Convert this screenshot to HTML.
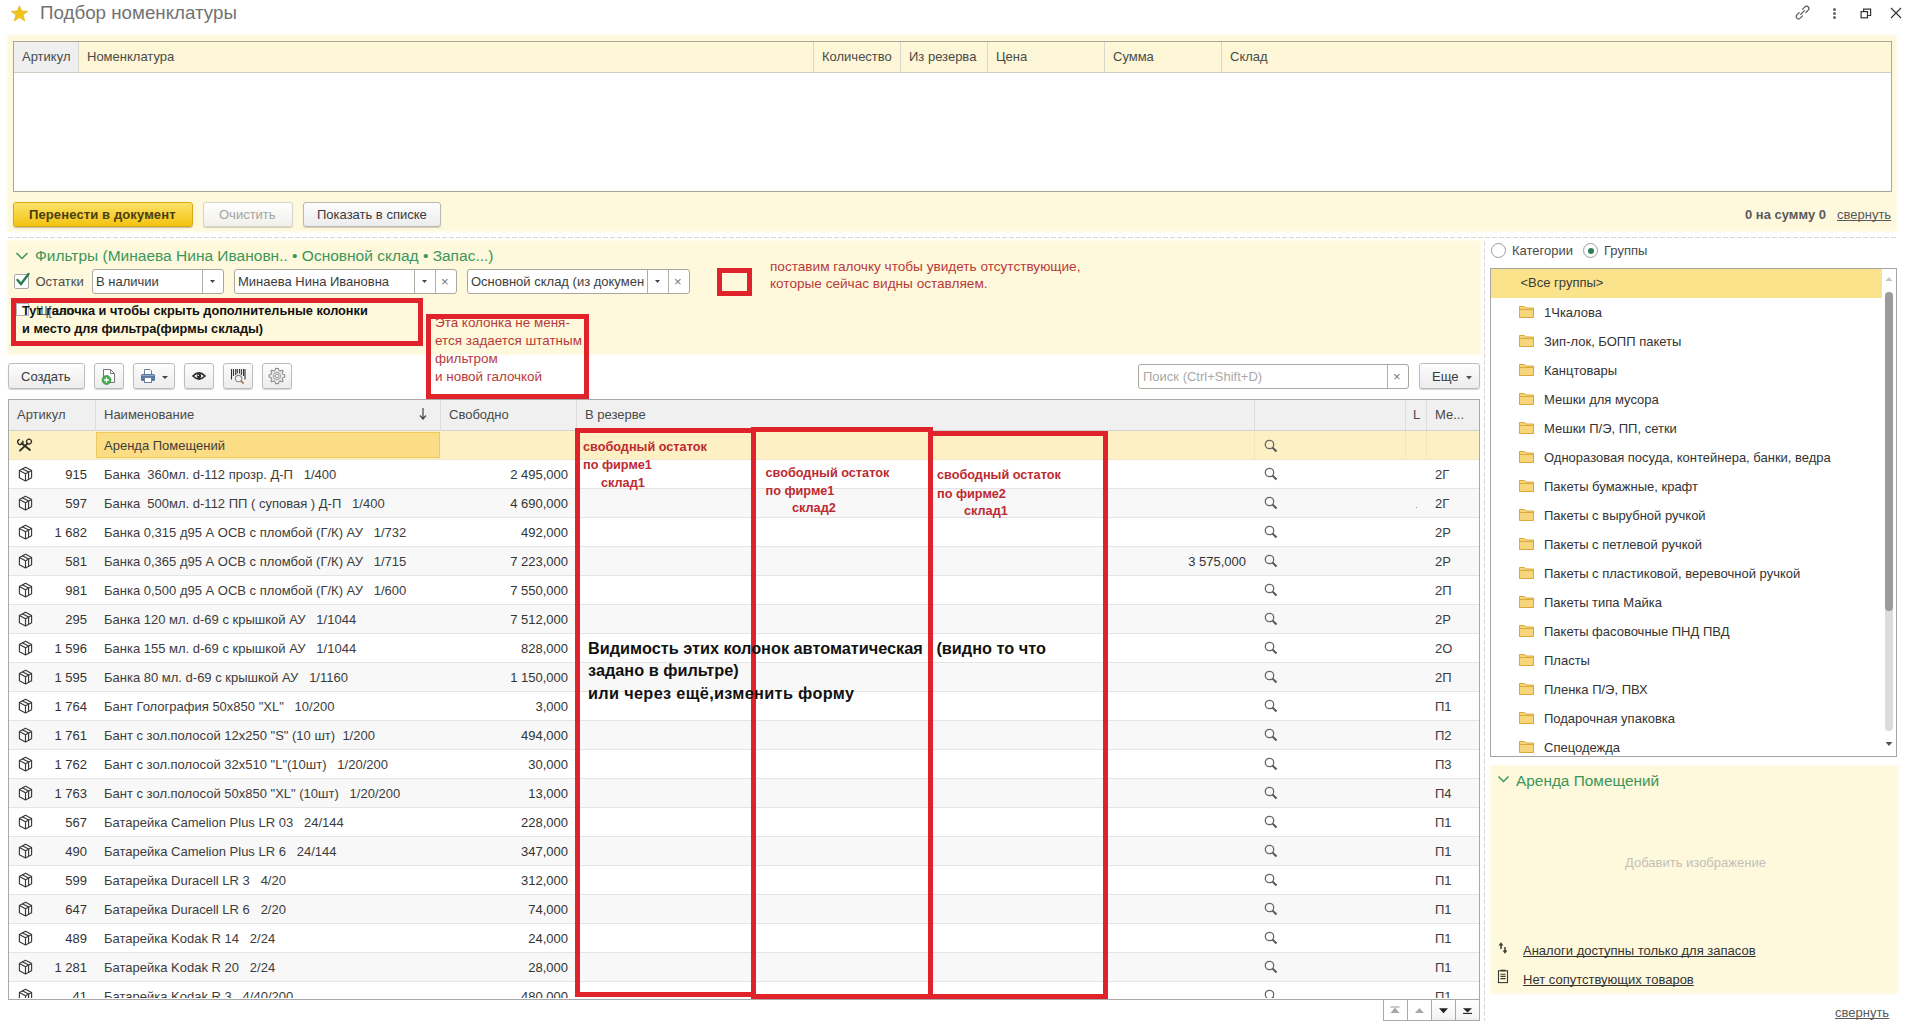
<!DOCTYPE html>
<html><head><meta charset="utf-8"><style>
*{box-sizing:border-box;margin:0;padding:0}
html,body{width:1908px;height:1027px;overflow:hidden;background:#fff}
body{position:relative;font-family:"Liberation Sans",sans-serif;font-size:13px;color:#3c3c3c}
.a{position:absolute}
.t{position:absolute;white-space:pre;line-height:1;text-decoration-skip-ink:none}
.yp{position:absolute;background:#fef9dc;box-shadow:0 0 2px 1px rgba(254,249,220,.8)}
.hl{position:absolute;height:1px;background:repeating-linear-gradient(90deg,#d9d9d9 0 5px,transparent 5px 7px)}
.vl{position:absolute;width:1px;background:repeating-linear-gradient(180deg,#d9d9d9 0 5px,transparent 5px 7px)}
.btn{position:absolute;border:1px solid #bdbdbd;border-radius:3px;background:linear-gradient(#fdfdfd,#ececec);box-shadow:0 1px 1px rgba(0,0,0,.18)}
.rbox{position:absolute;border:5px solid #e0222b}
.red{color:#b9393a}
.rb{color:#cf2a31;font-weight:bold}
.inp{position:absolute;border:1px solid #aaa89c;border-radius:3px;background:#fff}
.sep{position:absolute;width:1px;background:#b0aea2}
.hsep{position:absolute;height:1px;background:#e3e3e3}
</style></head><body>
<svg class="a" style="left:10px;top:5px" width="19" height="17" viewBox="0 0 19 17"><path d="M9.5 0.8 L11.8 6.0 L17.8 6.3 L13.1 10.0 L14.8 15.9 L9.5 12.6 L4.2 15.9 L5.9 10.0 L1.2 6.3 L7.2 6.0 Z" fill="#f3c318" stroke="#e0ac10" stroke-width=".6"/></svg>
<div class="t" style="left:40px;top:4.43px;font-size:18.75px;color:#727272">Подбор номенклатуры</div>
<svg class="a" style="left:1793px;top:3px" width="19" height="19" viewBox="0 0 19 19" fill="none" stroke="#555" stroke-width="1.2" stroke-linecap="round"><path d="M9.6 6.2 L11.9 3.9 a2.3 2.3 0 0 1 3.3 3.3 L12.9 9.5"/><path d="M6.2 9.6 L3.9 11.9 a2.3 2.3 0 0 0 3.3 3.3 L9.5 12.9"/><path d="M7.6 11.4 L11.4 7.6"/></svg>
<div class="a" style="left:1833px;top:8px;width:3px;height:3px;border-radius:50%;background:#666"></div>
<div class="a" style="left:1833px;top:12px;width:3px;height:3px;border-radius:50%;background:#666"></div>
<div class="a" style="left:1833px;top:16px;width:3px;height:3px;border-radius:50%;background:#666"></div>
<svg class="a" style="left:1860px;top:8px" width="12" height="11" viewBox="0 0 12 11" fill="none" stroke="#333" stroke-width="1.2"><rect x="1.1" y="3.6" width="6.4" height="6.2"/><path d="M3.6 3.6 V1.1 H10.6 V7.5 H7.5"/></svg>
<svg class="a" style="left:1889px;top:6px" width="14" height="14" viewBox="0 0 14 14" fill="none" stroke="#333" stroke-width="1.2"><path d="M2 2 L12 12 M12 2 L2 12"/></svg>
<div class="yp" style="left:8px;top:36px;width:1888px;height:195px;"></div>
<div class="a" style="left:13px;top:41px;width:1879px;height:151px;border:1px solid #a9a69a;background:#fff"></div>
<div class="a" style="left:14px;top:42px;width:1877px;height:31px;background:#fdf7d7;border-bottom:1px solid #cfcdc2"></div>
<div class="a" style="left:14px;top:42px;width:64px;height:31px;background:#efeff0;border-bottom:1px solid #cfcdc2"></div>
<div class="a" style="left:78px;top:42px;width:1px;height:30px;background:#d9d8cf"></div>
<div class="a" style="left:813px;top:42px;width:1px;height:30px;background:#d9d8cf"></div>
<div class="a" style="left:900px;top:42px;width:1px;height:30px;background:#d9d8cf"></div>
<div class="a" style="left:987px;top:42px;width:1px;height:30px;background:#d9d8cf"></div>
<div class="a" style="left:1104px;top:42px;width:1px;height:30px;background:#d9d8cf"></div>
<div class="a" style="left:1221px;top:42px;width:1px;height:30px;background:#d9d8cf"></div>
<div class="t" style="left:22px;top:50.00px;font-size:13.0px;color:#4a4a4a">Артикул</div>
<div class="t" style="left:87px;top:50.00px;font-size:13.0px;color:#4a4a4a">Номенклатура</div>
<div class="t" style="left:822px;top:50.00px;font-size:13.0px;color:#4a4a4a">Количество</div>
<div class="t" style="left:909px;top:50.00px;font-size:13.0px;color:#4a4a4a">Из резерва</div>
<div class="t" style="left:996px;top:50.00px;font-size:13.0px;color:#4a4a4a">Цена</div>
<div class="t" style="left:1113px;top:50.00px;font-size:13.0px;color:#4a4a4a">Сумма</div>
<div class="t" style="left:1230px;top:50.00px;font-size:13.0px;color:#4a4a4a">Склад</div>
<div class="a" style="left:13px;top:202px;width:180px;height:25px;border:1px solid #d8ac14;border-radius:3px;background:linear-gradient(#fbe16a,#f2c30f);box-shadow:0 1px 1px rgba(0,0,0,.25)"></div>
<div class="t" style="left:29px;top:208.00px;font-size:13.0px;font-weight:bold;color:#4b3e0a;letter-spacing:.12px">Перенести в документ</div>
<div class="btn" style="left:203px;top:202px;width:90px;height:25px;border-color:#d6d4cc;background:linear-gradient(#fefefe,#f1f0ea)"></div>
<div class="t" style="left:219px;top:208.00px;font-size:13.0px;color:#a3a3a0">Очистить</div>
<div class="btn" style="left:303px;top:202px;width:138px;height:25px;border-color:#b9b8b0"></div>
<div class="t" style="left:317px;top:208.00px;font-size:13.0px;color:#3a3a3a">Показать в списке</div>
<div class="t" style="left:1745px;top:208.00px;font-size:13.0px;font-weight:bold;color:#5a5a5a">0 на сумму 0</div>
<div class="t" style="left:1837px;top:208.00px;font-size:13.0px;color:#5a5a5a;text-decoration:underline;text-underline-offset:1px">свернуть</div>
<div class="hl" style="left:8px;top:237px;width:1888px;height:1px;"></div>
<div class="yp" style="left:8px;top:241px;width:1472px;height:113px;"></div>
<svg class="a" style="left:15px;top:251px" width="14" height="10" viewBox="0 0 14 10" fill="none" stroke="#3c955a" stroke-width="1.5"><path d="M1.5 2 L7 7.5 L12.5 2"/></svg>
<div class="t" style="left:35px;top:248.38px;font-size:15.5px;color:#3c955a">Фильтры (Минаева Нина Ивановн.. • Основной склад • Запас...)</div>
<div class="a" style="left:14px;top:274px;width:15px;height:15px;border:1px solid #a7a7a7;background:#fff;border-radius:2px"></div>
<svg class="a" style="left:15px;top:272px" width="16" height="15" viewBox="0 0 16 15" fill="none" stroke="#247d52" stroke-width="2.4" stroke-linecap="round"><path d="M2.5 8 L6 12 L13.5 2"/></svg>
<div class="t" style="left:35.5px;top:275.00px;font-size:13.0px;color:#4a4a4a">Остатки</div>
<div class="inp" style="left:92px;top:269px;width:132px;height:25px;"></div>
<div class="sep" style="left:202px;top:270px;width:1px;height:23px;"></div>
<div class="t" style="left:96px;top:275.00px;font-size:13.0px;color:#3c3c3c">В наличии</div>
<svg class="a" style="left:210px;top:280px" width="5" height="3"><path d="M0 0 H5 L2.5 3 Z" fill="#444"/></svg>
<div class="inp" style="left:234px;top:269px;width:223px;height:25px;"></div>
<div class="sep" style="left:414px;top:270px;width:1px;height:23px;"></div>
<div class="sep" style="left:435px;top:270px;width:1px;height:23px;"></div>
<div class="t" style="left:238px;top:275.00px;font-size:13.0px;color:#3c3c3c">Минаева Нина Ивановна</div>
<svg class="a" style="left:422px;top:280px" width="5" height="3"><path d="M0 0 H5 L2.5 3 Z" fill="#444"/></svg>
<div class="t" style="left:441px;top:275px;font-size:13px;color:#777">×</div>
<div class="inp" style="left:467px;top:269px;width:223px;height:25px;"></div>
<div class="sep" style="left:647px;top:270px;width:1px;height:23px;"></div>
<div class="sep" style="left:668px;top:270px;width:1px;height:23px;"></div>
<div class="t" style="left:471px;top:275.00px;font-size:13.0px;color:#3c3c3c">Основной склад (из докумен</div>
<svg class="a" style="left:655px;top:280px" width="5" height="3"><path d="M0 0 H5 L2.5 3 Z" fill="#444"/></svg>
<div class="t" style="left:674px;top:275px;font-size:13px;color:#777">×</div>
<div class="rbox" style="left:717px;top:268px;width:35px;height:28px;"></div>
<div class="t red" style="left:770px;top:260.49px;font-size:13.6px;">поставим галочку чтобы увидеть отсутствующие,</div>
<div class="t red" style="left:770px;top:277.49px;font-size:13.6px;">которые сейчас видны оставляем.</div>
<div class="a" style="left:16px;top:303px;width:13px;height:13px;border:1px solid #b5b5b5;background:#fff"></div>
<div class="t" style="left:36px;top:304.00px;font-size:13px;color:#606060">Щ[ean</div>
<div class="rbox" style="left:11px;top:298px;width:412px;height:48px;"></div>
<div class="t" style="left:22px;top:304.51px;font-size:12.75px;font-weight:bold;color:#111">Тут галочка и чтобы скрыть дополнительные колонки</div>
<div class="t" style="left:22px;top:322.51px;font-size:12.75px;font-weight:bold;color:#111">и место для фильтра(фирмы склады)</div>
<div class="t" style="left:435px;top:316.41px;font-size:13.45px;color:#b9393a">Эта колонка не меня-</div>
<div class="t" style="left:435px;top:334.31px;font-size:13.45px;color:#b9393a">ется задается штатным</div>
<div class="t" style="left:435px;top:352.21px;font-size:13.45px;color:#b9393a">фильтром</div>
<div class="t" style="left:435px;top:370.11px;font-size:13.45px;color:#b9393a">и новой галочкой</div>
<div class="rbox" style="left:426px;top:314px;width:163px;height:85px;"></div>
<div class="btn" style="left:8px;top:363px;width:77px;height:26px;"></div>
<div class="t" style="left:21px;top:370.00px;font-size:13.0px;color:#3a3a3a">Создать</div>
<div class="btn" style="left:94px;top:363px;width:30px;height:26px;"></div>
<svg class="a" style="left:100px;top:366px" width="18" height="20" viewBox="0 0 18 20"><path d="M3.5 3.5 H10.5 L14.5 7.5 V16.5 H3.5 Z" fill="#fff" stroke="#777" stroke-width="1"/><path d="M10.5 3.5 V7.5 H14.5" fill="none" stroke="#777" stroke-width="1"/><circle cx="6.5" cy="14" r="4.4" fill="#45b04f" stroke="#2e8c38" stroke-width=".8"/><path d="M6.5 11.6 V16.4 M4.1 14 H8.9" stroke="#fff" stroke-width="1.3"/></svg>
<div class="btn" style="left:133px;top:363px;width:42px;height:26px;"></div>
<svg class="a" style="left:140px;top:368px" width="16" height="16" viewBox="0 0 16 16"><path d="M4.5 6 V1.5 H10 L11.5 3 V6" fill="#fff" stroke="#6a7f99" stroke-width="1"/><rect x="1" y="6" width="14" height="7" rx="1.5" fill="#5679a3"/><rect x="2" y="7" width="12" height="1" fill="#8ba6c6"/><rect x="4.5" y="9.5" width="7" height="5" fill="#fff" stroke="#6a7f99" stroke-width="1"/></svg>
<svg class="a" style="left:162px;top:376px" width="6" height="3"><path d="M0 0 H6 L3 3 Z" fill="#444"/></svg>
<div class="btn" style="left:184px;top:363px;width:30px;height:26px;"></div>
<svg class="a" style="left:192px;top:371px" width="14" height="10" viewBox="0 0 14 10"><path d="M1 5 Q7 -1 13 5 Q7 11 1 5 Z" fill="#fff" stroke="#2b2b2b" stroke-width="1.7"/><circle cx="7" cy="5" r="2.3" fill="#2b2b2b"/><circle cx="6.2" cy="4.4" r=".7" fill="#fff"/></svg>
<div class="btn" style="left:223px;top:363px;width:30px;height:26px;"></div>
<svg class="a" style="left:229px;top:368px" width="18" height="18" viewBox="0 0 18 18" fill="none"><path d="M2.5 1 V11.5 M4.5 1 V8 M6.7 1 V7 M8.3 1 V5.5 M10.5 1 V5.5 M12.4 1 V7 M14.5 1 V8 M16 1 V11.5" stroke="#333" stroke-width="1.1"/><circle cx="9.6" cy="10.6" r="3.2" fill="#f4f4f4" stroke="#888" stroke-width="1.1"/><path d="M11.9 12.9 L14.6 15.6" stroke="#a57a4a" stroke-width="1.6"/></svg>
<div class="btn" style="left:262px;top:363px;width:30px;height:26px;"></div>
<svg class="a" style="left:268px;top:367px" width="18" height="18" viewBox="0 0 18 18"><path d="M9 1.2 L10.4 1.4 L10.9 3.4 L12.4 4.1 L14.2 3.1 L15.2 4.1 L14.2 5.9 L14.8 7.4 L16.8 7.9 V10.1 L14.8 10.6 L14.2 12.1 L15.2 13.9 L14.2 14.9 L12.4 13.9 L10.9 14.6 L10.4 16.6 H7.6 L7.1 14.6 L5.6 13.9 L3.8 14.9 L2.8 13.9 L3.8 12.1 L3.2 10.6 L1.2 10.1 V7.9 L3.2 7.4 L3.8 5.9 L2.8 4.1 L3.8 3.1 L5.6 4.1 L7.1 3.4 L7.6 1.4 Z" fill="#f2f2f2" stroke="#909090" stroke-width="1.1"/><circle cx="9" cy="9" r="3.6" fill="none" stroke="#a8a8a8" stroke-width="1.3"/><circle cx="9" cy="9" r="1.8" fill="#fff" stroke="#909090" stroke-width="1"/></svg>
<div class="inp" style="left:1138px;top:364px;width:271px;height:25px;"></div>
<div class="sep" style="left:1387px;top:365px;width:1px;height:23px;"></div>
<div class="t" style="left:1143px;top:370.00px;font-size:13.0px;color:#a9a9a9">Поиск (Ctrl+Shift+D)</div>
<div class="t" style="left:1393px;top:370px;font-size:13px;color:#777">×</div>
<div class="btn" style="left:1419px;top:363px;width:61px;height:26px;"></div>
<div class="t" style="left:1432px;top:370.00px;font-size:13.0px;color:#3a3a3a">Еще</div>
<svg class="a" style="left:1466px;top:376px" width="6" height="4"><path d="M0 0 H6 L3 3.5 Z" fill="#555"/></svg>
<div class="a" style="left:8px;top:399px;width:1472px;height:601px;border:1px solid #a9a9a9;background:#fff"></div>
<div class="a" style="left:9px;top:400px;width:1470px;height:31px;background:#f0f0f0;border-bottom:1px solid #d2d2d2"></div>
<div class="a" style="left:95px;top:400px;width:1px;height:30px;background:#dcdcdc"></div>
<div class="a" style="left:440px;top:400px;width:1px;height:30px;background:#dcdcdc"></div>
<div class="a" style="left:576px;top:400px;width:1px;height:30px;background:#dcdcdc"></div>
<div class="a" style="left:1254px;top:400px;width:1px;height:30px;background:#dcdcdc"></div>
<div class="a" style="left:1405px;top:400px;width:1px;height:30px;background:#dcdcdc"></div>
<div class="a" style="left:1426px;top:400px;width:1px;height:30px;background:#dcdcdc"></div>
<div class="t" style="left:17px;top:408.00px;font-size:13.0px;color:#4a4a4a">Артикул</div>
<div class="t" style="left:104px;top:408.00px;font-size:13.0px;color:#4a4a4a">Наименование</div>
<div class="t" style="left:449px;top:408.00px;font-size:13.0px;color:#4a4a4a">Свободно</div>
<div class="t" style="left:585px;top:408.00px;font-size:13.0px;color:#4a4a4a">В резерве</div>
<div class="t" style="left:1413px;top:408.00px;font-size:13.0px;color:#4a4a4a">L</div>
<div class="t" style="left:1435px;top:408.00px;font-size:13.0px;color:#4a4a4a">Ме...</div>
<svg class="a" style="left:419px;top:408px" width="8" height="12" viewBox="0 0 8 12"><path d="M4 0 V10.5 M1 7.5 L4 11 L7 7.5" fill="none" stroke="#444" stroke-width="1.2"/></svg>
<div class="a" style="left:9px;top:431px;width:1470px;height:567px;overflow:hidden">
<div class="a" style="left:0px;top:0px;width:1470px;height:28px;background:#fdf0c4"></div>
<div class="a" style="left:87px;top:1px;width:344px;height:26px;background:#fbdd85;border:1px solid #efc85a"></div>
<div class="a" style="left:567px;top:0px;width:1px;height:28px;background:#f4e5b5"></div>
<div class="a" style="left:1245px;top:0px;width:1px;height:28px;background:#f4e5b5"></div>
<div class="a" style="left:1396px;top:0px;width:1px;height:28px;background:#f4e5b5"></div>
<div class="a" style="left:1417px;top:0px;width:1px;height:28px;background:#f4e5b5"></div>
<div class="a" style="left:0px;top:28px;width:1470px;height:1px;background:#efe7cc"></div>
<svg class="a" style="left:8px;top:7px" width="16" height="14" viewBox="0 0 16 14" fill="none" stroke="#2e2e24" stroke-linecap="round"><path d="M4.6 5.2 L13 12" stroke-width="1.9"/><path d="M2.2 1.6 a2.6 2.6 0 1 0 3.6 1.6" stroke-width="1.5"/><path d="M10.4 5.6 L3 12.6" stroke-width="1.9"/><ellipse cx="12" cy="3.6" rx="2.4" ry="2.4" transform="rotate(45 12 3.6)" stroke-width="1.3"/></svg>
<div class="t" style="left:95px;top:8.00px;font-size:13.0px;color:#3c3c3c">Аренда Помещений</div>
<svg class="a" style="left:1255px;top:8px" width="14" height="14" viewBox="0 0 14 14"><circle cx="5.5" cy="5.5" r="4.2" fill="none" stroke="#666" stroke-width="1.3"/><path d="M8.6 8.6 L12.5 12.5" stroke="#555" stroke-width="2"/></svg>
<div class="a" style="left:0px;top:29px;width:1470px;height:28px;background:#ffffff"></div>
<div class="a" style="left:0px;top:57px;width:1470px;height:1px;background:#e4e4e4"></div>
<svg class="a" style="left:9px;top:35px" width="15" height="16" viewBox="0 0 15 16" fill="none" stroke="#3a3a3a" stroke-width="1.15" stroke-linejoin="round"><path d="M7.5 1.2 L13.6 4.4 V11.8 L7.5 15 L1.4 11.8 V4.4 Z"/><path d="M1.4 4.4 L7.5 7.7 L13.6 4.4 M7.5 7.7 V15"/><path d="M4.3 2.7 L10.6 6 V13.4"/></svg>
<div class="t" style="right:1392px;top:37.00px;font-size:13.0px;color:#333">915</div>
<div class="t" style="left:95px;top:37.00px;font-size:13.0px;color:#3c3c3c">Банка  360мл. d-112 прозр. Д-П   1/400</div>
<div class="t" style="right:911px;top:37.00px;font-size:13.0px;color:#333">2 495,000</div>
<svg class="a" style="left:1255px;top:36px" width="14" height="14" viewBox="0 0 14 14"><circle cx="5.5" cy="5.5" r="4.2" fill="none" stroke="#666" stroke-width="1.3"/><path d="M8.6 8.6 L12.5 12.5" stroke="#555" stroke-width="2"/></svg>
<div class="t" style="left:1426px;top:37.00px;font-size:13.0px;color:#3c3c3c">2Г</div>
<div class="a" style="left:0px;top:58px;width:1470px;height:28px;background:#f8f8f8"></div>
<div class="a" style="left:0px;top:86px;width:1470px;height:1px;background:#e4e4e4"></div>
<svg class="a" style="left:9px;top:64px" width="15" height="16" viewBox="0 0 15 16" fill="none" stroke="#3a3a3a" stroke-width="1.15" stroke-linejoin="round"><path d="M7.5 1.2 L13.6 4.4 V11.8 L7.5 15 L1.4 11.8 V4.4 Z"/><path d="M1.4 4.4 L7.5 7.7 L13.6 4.4 M7.5 7.7 V15"/><path d="M4.3 2.7 L10.6 6 V13.4"/></svg>
<div class="t" style="right:1392px;top:66.00px;font-size:13.0px;color:#333">597</div>
<div class="t" style="left:95px;top:66.00px;font-size:13.0px;color:#3c3c3c">Банка  500мл. d-112 ПП ( суповая ) Д-П   1/400</div>
<div class="t" style="right:911px;top:66.00px;font-size:13.0px;color:#333">4 690,000</div>
<svg class="a" style="left:1255px;top:65px" width="14" height="14" viewBox="0 0 14 14"><circle cx="5.5" cy="5.5" r="4.2" fill="none" stroke="#666" stroke-width="1.3"/><path d="M8.6 8.6 L12.5 12.5" stroke="#555" stroke-width="2"/></svg>
<div class="t" style="left:1426px;top:66.00px;font-size:13.0px;color:#3c3c3c">2Г</div>
<div class="a" style="left:0px;top:87px;width:1470px;height:28px;background:#ffffff"></div>
<div class="a" style="left:0px;top:115px;width:1470px;height:1px;background:#e4e4e4"></div>
<svg class="a" style="left:9px;top:93px" width="15" height="16" viewBox="0 0 15 16" fill="none" stroke="#3a3a3a" stroke-width="1.15" stroke-linejoin="round"><path d="M7.5 1.2 L13.6 4.4 V11.8 L7.5 15 L1.4 11.8 V4.4 Z"/><path d="M1.4 4.4 L7.5 7.7 L13.6 4.4 M7.5 7.7 V15"/><path d="M4.3 2.7 L10.6 6 V13.4"/></svg>
<div class="t" style="right:1392px;top:95.00px;font-size:13.0px;color:#333">1 682</div>
<div class="t" style="left:95px;top:95.00px;font-size:13.0px;color:#3c3c3c">Банка 0,315 д95 А ОСВ с пломбой (Г/К) АУ   1/732</div>
<div class="t" style="right:911px;top:95.00px;font-size:13.0px;color:#333">492,000</div>
<svg class="a" style="left:1255px;top:94px" width="14" height="14" viewBox="0 0 14 14"><circle cx="5.5" cy="5.5" r="4.2" fill="none" stroke="#666" stroke-width="1.3"/><path d="M8.6 8.6 L12.5 12.5" stroke="#555" stroke-width="2"/></svg>
<div class="t" style="left:1426px;top:95.00px;font-size:13.0px;color:#3c3c3c">2Р</div>
<div class="a" style="left:0px;top:116px;width:1470px;height:28px;background:#f8f8f8"></div>
<div class="a" style="left:0px;top:144px;width:1470px;height:1px;background:#e4e4e4"></div>
<svg class="a" style="left:9px;top:122px" width="15" height="16" viewBox="0 0 15 16" fill="none" stroke="#3a3a3a" stroke-width="1.15" stroke-linejoin="round"><path d="M7.5 1.2 L13.6 4.4 V11.8 L7.5 15 L1.4 11.8 V4.4 Z"/><path d="M1.4 4.4 L7.5 7.7 L13.6 4.4 M7.5 7.7 V15"/><path d="M4.3 2.7 L10.6 6 V13.4"/></svg>
<div class="t" style="right:1392px;top:124.00px;font-size:13.0px;color:#333">581</div>
<div class="t" style="left:95px;top:124.00px;font-size:13.0px;color:#3c3c3c">Банка 0,365 д95 А ОСВ с пломбой (Г/К) АУ   1/715</div>
<div class="t" style="right:911px;top:124.00px;font-size:13.0px;color:#333">7 223,000</div>
<div class="t" style="right:233px;top:124.00px;font-size:13.0px;color:#333">3 575,000</div>
<svg class="a" style="left:1255px;top:123px" width="14" height="14" viewBox="0 0 14 14"><circle cx="5.5" cy="5.5" r="4.2" fill="none" stroke="#666" stroke-width="1.3"/><path d="M8.6 8.6 L12.5 12.5" stroke="#555" stroke-width="2"/></svg>
<div class="t" style="left:1426px;top:124.00px;font-size:13.0px;color:#3c3c3c">2Р</div>
<div class="a" style="left:0px;top:145px;width:1470px;height:28px;background:#ffffff"></div>
<div class="a" style="left:0px;top:173px;width:1470px;height:1px;background:#e4e4e4"></div>
<svg class="a" style="left:9px;top:151px" width="15" height="16" viewBox="0 0 15 16" fill="none" stroke="#3a3a3a" stroke-width="1.15" stroke-linejoin="round"><path d="M7.5 1.2 L13.6 4.4 V11.8 L7.5 15 L1.4 11.8 V4.4 Z"/><path d="M1.4 4.4 L7.5 7.7 L13.6 4.4 M7.5 7.7 V15"/><path d="M4.3 2.7 L10.6 6 V13.4"/></svg>
<div class="t" style="right:1392px;top:153.00px;font-size:13.0px;color:#333">981</div>
<div class="t" style="left:95px;top:153.00px;font-size:13.0px;color:#3c3c3c">Банка 0,500 д95 А ОСВ с пломбой (Г/К) АУ   1/600</div>
<div class="t" style="right:911px;top:153.00px;font-size:13.0px;color:#333">7 550,000</div>
<svg class="a" style="left:1255px;top:152px" width="14" height="14" viewBox="0 0 14 14"><circle cx="5.5" cy="5.5" r="4.2" fill="none" stroke="#666" stroke-width="1.3"/><path d="M8.6 8.6 L12.5 12.5" stroke="#555" stroke-width="2"/></svg>
<div class="t" style="left:1426px;top:153.00px;font-size:13.0px;color:#3c3c3c">2П</div>
<div class="a" style="left:0px;top:174px;width:1470px;height:28px;background:#f8f8f8"></div>
<div class="a" style="left:0px;top:202px;width:1470px;height:1px;background:#e4e4e4"></div>
<svg class="a" style="left:9px;top:180px" width="15" height="16" viewBox="0 0 15 16" fill="none" stroke="#3a3a3a" stroke-width="1.15" stroke-linejoin="round"><path d="M7.5 1.2 L13.6 4.4 V11.8 L7.5 15 L1.4 11.8 V4.4 Z"/><path d="M1.4 4.4 L7.5 7.7 L13.6 4.4 M7.5 7.7 V15"/><path d="M4.3 2.7 L10.6 6 V13.4"/></svg>
<div class="t" style="right:1392px;top:182.00px;font-size:13.0px;color:#333">295</div>
<div class="t" style="left:95px;top:182.00px;font-size:13.0px;color:#3c3c3c">Банка 120 мл. d-69 с крышкой АУ   1/1044</div>
<div class="t" style="right:911px;top:182.00px;font-size:13.0px;color:#333">7 512,000</div>
<svg class="a" style="left:1255px;top:181px" width="14" height="14" viewBox="0 0 14 14"><circle cx="5.5" cy="5.5" r="4.2" fill="none" stroke="#666" stroke-width="1.3"/><path d="M8.6 8.6 L12.5 12.5" stroke="#555" stroke-width="2"/></svg>
<div class="t" style="left:1426px;top:182.00px;font-size:13.0px;color:#3c3c3c">2Р</div>
<div class="a" style="left:0px;top:203px;width:1470px;height:28px;background:#ffffff"></div>
<div class="a" style="left:0px;top:231px;width:1470px;height:1px;background:#e4e4e4"></div>
<svg class="a" style="left:9px;top:209px" width="15" height="16" viewBox="0 0 15 16" fill="none" stroke="#3a3a3a" stroke-width="1.15" stroke-linejoin="round"><path d="M7.5 1.2 L13.6 4.4 V11.8 L7.5 15 L1.4 11.8 V4.4 Z"/><path d="M1.4 4.4 L7.5 7.7 L13.6 4.4 M7.5 7.7 V15"/><path d="M4.3 2.7 L10.6 6 V13.4"/></svg>
<div class="t" style="right:1392px;top:211.00px;font-size:13.0px;color:#333">1 596</div>
<div class="t" style="left:95px;top:211.00px;font-size:13.0px;color:#3c3c3c">Банка 155 мл. d-69 с крышкой АУ   1/1044</div>
<div class="t" style="right:911px;top:211.00px;font-size:13.0px;color:#333">828,000</div>
<svg class="a" style="left:1255px;top:210px" width="14" height="14" viewBox="0 0 14 14"><circle cx="5.5" cy="5.5" r="4.2" fill="none" stroke="#666" stroke-width="1.3"/><path d="M8.6 8.6 L12.5 12.5" stroke="#555" stroke-width="2"/></svg>
<div class="t" style="left:1426px;top:211.00px;font-size:13.0px;color:#3c3c3c">2О</div>
<div class="a" style="left:0px;top:232px;width:1470px;height:28px;background:#f8f8f8"></div>
<div class="a" style="left:0px;top:260px;width:1470px;height:1px;background:#e4e4e4"></div>
<svg class="a" style="left:9px;top:238px" width="15" height="16" viewBox="0 0 15 16" fill="none" stroke="#3a3a3a" stroke-width="1.15" stroke-linejoin="round"><path d="M7.5 1.2 L13.6 4.4 V11.8 L7.5 15 L1.4 11.8 V4.4 Z"/><path d="M1.4 4.4 L7.5 7.7 L13.6 4.4 M7.5 7.7 V15"/><path d="M4.3 2.7 L10.6 6 V13.4"/></svg>
<div class="t" style="right:1392px;top:240.00px;font-size:13.0px;color:#333">1 595</div>
<div class="t" style="left:95px;top:240.00px;font-size:13.0px;color:#3c3c3c">Банка 80 мл. d-69 с крышкой АУ   1/1160</div>
<div class="t" style="right:911px;top:240.00px;font-size:13.0px;color:#333">1 150,000</div>
<svg class="a" style="left:1255px;top:239px" width="14" height="14" viewBox="0 0 14 14"><circle cx="5.5" cy="5.5" r="4.2" fill="none" stroke="#666" stroke-width="1.3"/><path d="M8.6 8.6 L12.5 12.5" stroke="#555" stroke-width="2"/></svg>
<div class="t" style="left:1426px;top:240.00px;font-size:13.0px;color:#3c3c3c">2П</div>
<div class="a" style="left:0px;top:261px;width:1470px;height:28px;background:#ffffff"></div>
<div class="a" style="left:0px;top:289px;width:1470px;height:1px;background:#e4e4e4"></div>
<svg class="a" style="left:9px;top:267px" width="15" height="16" viewBox="0 0 15 16" fill="none" stroke="#3a3a3a" stroke-width="1.15" stroke-linejoin="round"><path d="M7.5 1.2 L13.6 4.4 V11.8 L7.5 15 L1.4 11.8 V4.4 Z"/><path d="M1.4 4.4 L7.5 7.7 L13.6 4.4 M7.5 7.7 V15"/><path d="M4.3 2.7 L10.6 6 V13.4"/></svg>
<div class="t" style="right:1392px;top:269.00px;font-size:13.0px;color:#333">1 764</div>
<div class="t" style="left:95px;top:269.00px;font-size:13.0px;color:#3c3c3c">Бант Голография 50х850 "XL"   10/200</div>
<div class="t" style="right:911px;top:269.00px;font-size:13.0px;color:#333">3,000</div>
<svg class="a" style="left:1255px;top:268px" width="14" height="14" viewBox="0 0 14 14"><circle cx="5.5" cy="5.5" r="4.2" fill="none" stroke="#666" stroke-width="1.3"/><path d="M8.6 8.6 L12.5 12.5" stroke="#555" stroke-width="2"/></svg>
<div class="t" style="left:1426px;top:269.00px;font-size:13.0px;color:#3c3c3c">П1</div>
<div class="a" style="left:0px;top:290px;width:1470px;height:28px;background:#f8f8f8"></div>
<div class="a" style="left:0px;top:318px;width:1470px;height:1px;background:#e4e4e4"></div>
<svg class="a" style="left:9px;top:296px" width="15" height="16" viewBox="0 0 15 16" fill="none" stroke="#3a3a3a" stroke-width="1.15" stroke-linejoin="round"><path d="M7.5 1.2 L13.6 4.4 V11.8 L7.5 15 L1.4 11.8 V4.4 Z"/><path d="M1.4 4.4 L7.5 7.7 L13.6 4.4 M7.5 7.7 V15"/><path d="M4.3 2.7 L10.6 6 V13.4"/></svg>
<div class="t" style="right:1392px;top:298.00px;font-size:13.0px;color:#333">1 761</div>
<div class="t" style="left:95px;top:298.00px;font-size:13.0px;color:#3c3c3c">Бант с зол.полосой 12х250 "S" (10 шт)  1/200</div>
<div class="t" style="right:911px;top:298.00px;font-size:13.0px;color:#333">494,000</div>
<svg class="a" style="left:1255px;top:297px" width="14" height="14" viewBox="0 0 14 14"><circle cx="5.5" cy="5.5" r="4.2" fill="none" stroke="#666" stroke-width="1.3"/><path d="M8.6 8.6 L12.5 12.5" stroke="#555" stroke-width="2"/></svg>
<div class="t" style="left:1426px;top:298.00px;font-size:13.0px;color:#3c3c3c">П2</div>
<div class="a" style="left:0px;top:319px;width:1470px;height:28px;background:#ffffff"></div>
<div class="a" style="left:0px;top:347px;width:1470px;height:1px;background:#e4e4e4"></div>
<svg class="a" style="left:9px;top:325px" width="15" height="16" viewBox="0 0 15 16" fill="none" stroke="#3a3a3a" stroke-width="1.15" stroke-linejoin="round"><path d="M7.5 1.2 L13.6 4.4 V11.8 L7.5 15 L1.4 11.8 V4.4 Z"/><path d="M1.4 4.4 L7.5 7.7 L13.6 4.4 M7.5 7.7 V15"/><path d="M4.3 2.7 L10.6 6 V13.4"/></svg>
<div class="t" style="right:1392px;top:327.00px;font-size:13.0px;color:#333">1 762</div>
<div class="t" style="left:95px;top:327.00px;font-size:13.0px;color:#3c3c3c">Бант с зол.полосой 32х510 "L"(10шт)   1/20/200</div>
<div class="t" style="right:911px;top:327.00px;font-size:13.0px;color:#333">30,000</div>
<svg class="a" style="left:1255px;top:326px" width="14" height="14" viewBox="0 0 14 14"><circle cx="5.5" cy="5.5" r="4.2" fill="none" stroke="#666" stroke-width="1.3"/><path d="M8.6 8.6 L12.5 12.5" stroke="#555" stroke-width="2"/></svg>
<div class="t" style="left:1426px;top:327.00px;font-size:13.0px;color:#3c3c3c">П3</div>
<div class="a" style="left:0px;top:348px;width:1470px;height:28px;background:#f8f8f8"></div>
<div class="a" style="left:0px;top:376px;width:1470px;height:1px;background:#e4e4e4"></div>
<svg class="a" style="left:9px;top:354px" width="15" height="16" viewBox="0 0 15 16" fill="none" stroke="#3a3a3a" stroke-width="1.15" stroke-linejoin="round"><path d="M7.5 1.2 L13.6 4.4 V11.8 L7.5 15 L1.4 11.8 V4.4 Z"/><path d="M1.4 4.4 L7.5 7.7 L13.6 4.4 M7.5 7.7 V15"/><path d="M4.3 2.7 L10.6 6 V13.4"/></svg>
<div class="t" style="right:1392px;top:356.00px;font-size:13.0px;color:#333">1 763</div>
<div class="t" style="left:95px;top:356.00px;font-size:13.0px;color:#3c3c3c">Бант с зол.полосой 50х850 "XL" (10шт)   1/20/200</div>
<div class="t" style="right:911px;top:356.00px;font-size:13.0px;color:#333">13,000</div>
<svg class="a" style="left:1255px;top:355px" width="14" height="14" viewBox="0 0 14 14"><circle cx="5.5" cy="5.5" r="4.2" fill="none" stroke="#666" stroke-width="1.3"/><path d="M8.6 8.6 L12.5 12.5" stroke="#555" stroke-width="2"/></svg>
<div class="t" style="left:1426px;top:356.00px;font-size:13.0px;color:#3c3c3c">П4</div>
<div class="a" style="left:0px;top:377px;width:1470px;height:28px;background:#ffffff"></div>
<div class="a" style="left:0px;top:405px;width:1470px;height:1px;background:#e4e4e4"></div>
<svg class="a" style="left:9px;top:383px" width="15" height="16" viewBox="0 0 15 16" fill="none" stroke="#3a3a3a" stroke-width="1.15" stroke-linejoin="round"><path d="M7.5 1.2 L13.6 4.4 V11.8 L7.5 15 L1.4 11.8 V4.4 Z"/><path d="M1.4 4.4 L7.5 7.7 L13.6 4.4 M7.5 7.7 V15"/><path d="M4.3 2.7 L10.6 6 V13.4"/></svg>
<div class="t" style="right:1392px;top:385.00px;font-size:13.0px;color:#333">567</div>
<div class="t" style="left:95px;top:385.00px;font-size:13.0px;color:#3c3c3c">Батарейка Camelion Plus LR 03   24/144</div>
<div class="t" style="right:911px;top:385.00px;font-size:13.0px;color:#333">228,000</div>
<svg class="a" style="left:1255px;top:384px" width="14" height="14" viewBox="0 0 14 14"><circle cx="5.5" cy="5.5" r="4.2" fill="none" stroke="#666" stroke-width="1.3"/><path d="M8.6 8.6 L12.5 12.5" stroke="#555" stroke-width="2"/></svg>
<div class="t" style="left:1426px;top:385.00px;font-size:13.0px;color:#3c3c3c">П1</div>
<div class="a" style="left:0px;top:406px;width:1470px;height:28px;background:#f8f8f8"></div>
<div class="a" style="left:0px;top:434px;width:1470px;height:1px;background:#e4e4e4"></div>
<svg class="a" style="left:9px;top:412px" width="15" height="16" viewBox="0 0 15 16" fill="none" stroke="#3a3a3a" stroke-width="1.15" stroke-linejoin="round"><path d="M7.5 1.2 L13.6 4.4 V11.8 L7.5 15 L1.4 11.8 V4.4 Z"/><path d="M1.4 4.4 L7.5 7.7 L13.6 4.4 M7.5 7.7 V15"/><path d="M4.3 2.7 L10.6 6 V13.4"/></svg>
<div class="t" style="right:1392px;top:414.00px;font-size:13.0px;color:#333">490</div>
<div class="t" style="left:95px;top:414.00px;font-size:13.0px;color:#3c3c3c">Батарейка Camelion Plus LR 6   24/144</div>
<div class="t" style="right:911px;top:414.00px;font-size:13.0px;color:#333">347,000</div>
<svg class="a" style="left:1255px;top:413px" width="14" height="14" viewBox="0 0 14 14"><circle cx="5.5" cy="5.5" r="4.2" fill="none" stroke="#666" stroke-width="1.3"/><path d="M8.6 8.6 L12.5 12.5" stroke="#555" stroke-width="2"/></svg>
<div class="t" style="left:1426px;top:414.00px;font-size:13.0px;color:#3c3c3c">П1</div>
<div class="a" style="left:0px;top:435px;width:1470px;height:28px;background:#ffffff"></div>
<div class="a" style="left:0px;top:463px;width:1470px;height:1px;background:#e4e4e4"></div>
<svg class="a" style="left:9px;top:441px" width="15" height="16" viewBox="0 0 15 16" fill="none" stroke="#3a3a3a" stroke-width="1.15" stroke-linejoin="round"><path d="M7.5 1.2 L13.6 4.4 V11.8 L7.5 15 L1.4 11.8 V4.4 Z"/><path d="M1.4 4.4 L7.5 7.7 L13.6 4.4 M7.5 7.7 V15"/><path d="M4.3 2.7 L10.6 6 V13.4"/></svg>
<div class="t" style="right:1392px;top:443.00px;font-size:13.0px;color:#333">599</div>
<div class="t" style="left:95px;top:443.00px;font-size:13.0px;color:#3c3c3c">Батарейка Duracell LR 3   4/20</div>
<div class="t" style="right:911px;top:443.00px;font-size:13.0px;color:#333">312,000</div>
<svg class="a" style="left:1255px;top:442px" width="14" height="14" viewBox="0 0 14 14"><circle cx="5.5" cy="5.5" r="4.2" fill="none" stroke="#666" stroke-width="1.3"/><path d="M8.6 8.6 L12.5 12.5" stroke="#555" stroke-width="2"/></svg>
<div class="t" style="left:1426px;top:443.00px;font-size:13.0px;color:#3c3c3c">П1</div>
<div class="a" style="left:0px;top:464px;width:1470px;height:28px;background:#f8f8f8"></div>
<div class="a" style="left:0px;top:492px;width:1470px;height:1px;background:#e4e4e4"></div>
<svg class="a" style="left:9px;top:470px" width="15" height="16" viewBox="0 0 15 16" fill="none" stroke="#3a3a3a" stroke-width="1.15" stroke-linejoin="round"><path d="M7.5 1.2 L13.6 4.4 V11.8 L7.5 15 L1.4 11.8 V4.4 Z"/><path d="M1.4 4.4 L7.5 7.7 L13.6 4.4 M7.5 7.7 V15"/><path d="M4.3 2.7 L10.6 6 V13.4"/></svg>
<div class="t" style="right:1392px;top:472.00px;font-size:13.0px;color:#333">647</div>
<div class="t" style="left:95px;top:472.00px;font-size:13.0px;color:#3c3c3c">Батарейка Duracell LR 6   2/20</div>
<div class="t" style="right:911px;top:472.00px;font-size:13.0px;color:#333">74,000</div>
<svg class="a" style="left:1255px;top:471px" width="14" height="14" viewBox="0 0 14 14"><circle cx="5.5" cy="5.5" r="4.2" fill="none" stroke="#666" stroke-width="1.3"/><path d="M8.6 8.6 L12.5 12.5" stroke="#555" stroke-width="2"/></svg>
<div class="t" style="left:1426px;top:472.00px;font-size:13.0px;color:#3c3c3c">П1</div>
<div class="a" style="left:0px;top:493px;width:1470px;height:28px;background:#ffffff"></div>
<div class="a" style="left:0px;top:521px;width:1470px;height:1px;background:#e4e4e4"></div>
<svg class="a" style="left:9px;top:499px" width="15" height="16" viewBox="0 0 15 16" fill="none" stroke="#3a3a3a" stroke-width="1.15" stroke-linejoin="round"><path d="M7.5 1.2 L13.6 4.4 V11.8 L7.5 15 L1.4 11.8 V4.4 Z"/><path d="M1.4 4.4 L7.5 7.7 L13.6 4.4 M7.5 7.7 V15"/><path d="M4.3 2.7 L10.6 6 V13.4"/></svg>
<div class="t" style="right:1392px;top:501.00px;font-size:13.0px;color:#333">489</div>
<div class="t" style="left:95px;top:501.00px;font-size:13.0px;color:#3c3c3c">Батарейка Kodak R 14   2/24</div>
<div class="t" style="right:911px;top:501.00px;font-size:13.0px;color:#333">24,000</div>
<svg class="a" style="left:1255px;top:500px" width="14" height="14" viewBox="0 0 14 14"><circle cx="5.5" cy="5.5" r="4.2" fill="none" stroke="#666" stroke-width="1.3"/><path d="M8.6 8.6 L12.5 12.5" stroke="#555" stroke-width="2"/></svg>
<div class="t" style="left:1426px;top:501.00px;font-size:13.0px;color:#3c3c3c">П1</div>
<div class="a" style="left:0px;top:522px;width:1470px;height:28px;background:#f8f8f8"></div>
<div class="a" style="left:0px;top:550px;width:1470px;height:1px;background:#e4e4e4"></div>
<svg class="a" style="left:9px;top:528px" width="15" height="16" viewBox="0 0 15 16" fill="none" stroke="#3a3a3a" stroke-width="1.15" stroke-linejoin="round"><path d="M7.5 1.2 L13.6 4.4 V11.8 L7.5 15 L1.4 11.8 V4.4 Z"/><path d="M1.4 4.4 L7.5 7.7 L13.6 4.4 M7.5 7.7 V15"/><path d="M4.3 2.7 L10.6 6 V13.4"/></svg>
<div class="t" style="right:1392px;top:530.00px;font-size:13.0px;color:#333">1 281</div>
<div class="t" style="left:95px;top:530.00px;font-size:13.0px;color:#3c3c3c">Батарейка Kodak R 20   2/24</div>
<div class="t" style="right:911px;top:530.00px;font-size:13.0px;color:#333">28,000</div>
<svg class="a" style="left:1255px;top:529px" width="14" height="14" viewBox="0 0 14 14"><circle cx="5.5" cy="5.5" r="4.2" fill="none" stroke="#666" stroke-width="1.3"/><path d="M8.6 8.6 L12.5 12.5" stroke="#555" stroke-width="2"/></svg>
<div class="t" style="left:1426px;top:530.00px;font-size:13.0px;color:#3c3c3c">П1</div>
<div class="a" style="left:0px;top:551px;width:1470px;height:28px;background:#ffffff"></div>
<div class="a" style="left:0px;top:579px;width:1470px;height:1px;background:#e4e4e4"></div>
<svg class="a" style="left:9px;top:557px" width="15" height="16" viewBox="0 0 15 16" fill="none" stroke="#3a3a3a" stroke-width="1.15" stroke-linejoin="round"><path d="M7.5 1.2 L13.6 4.4 V11.8 L7.5 15 L1.4 11.8 V4.4 Z"/><path d="M1.4 4.4 L7.5 7.7 L13.6 4.4 M7.5 7.7 V15"/><path d="M4.3 2.7 L10.6 6 V13.4"/></svg>
<div class="t" style="right:1392px;top:559.00px;font-size:13.0px;color:#333">41</div>
<div class="t" style="left:95px;top:559.00px;font-size:13.0px;color:#3c3c3c">Батарейка Kodak R 3   4/40/200</div>
<div class="t" style="right:911px;top:559.00px;font-size:13.0px;color:#333">480,000</div>
<svg class="a" style="left:1255px;top:558px" width="14" height="14" viewBox="0 0 14 14"><circle cx="5.5" cy="5.5" r="4.2" fill="none" stroke="#666" stroke-width="1.3"/><path d="M8.6 8.6 L12.5 12.5" stroke="#555" stroke-width="2"/></svg>
<div class="t" style="left:1426px;top:559.00px;font-size:13.0px;color:#3c3c3c">П1</div>
<div class="a" style="left:1407px;top:76px;width:1px;height:1px;background:#999"></div>
</div>
<div class="a" style="left:1383px;top:999px;width:97px;height:22px;border:1px solid #a9a9a9;background:#fff"></div>
<div class="a" style="left:1432px;top:1000px;width:47px;height:20px;background:linear-gradient(#fff,#f1f1f1)"></div>
<div class="a" style="left:1407px;top:1000px;width:1px;height:20px;background:#a9a9a9"></div>
<div class="a" style="left:1431px;top:1000px;width:1px;height:20px;background:#a9a9a9"></div>
<div class="a" style="left:1455px;top:1000px;width:1px;height:20px;background:#a9a9a9"></div>
<svg class="a" style="left:1383px;top:1000px" width="97" height="22" viewBox="0 0 97 22"><path d="M7.5 7 H16.5" stroke="#a8a8a8" stroke-width="1.2"/><path d="M7.5 13 L12 7.6 L16.5 13 Z" fill="#a8a8a8"/><path d="M32 13 L36.5 8 L41 13 Z" fill="#a8a8a8"/><path d="M56 8.2 H65 L60.5 13.2 Z" fill="#222"/><path d="M80 8.2 H89 L84.5 12.6 Z" fill="#222"/><path d="M80 13.4 H89" stroke="#222" stroke-width="1.1"/></svg>
<div class="rbox" style="left:575px;top:428px;width:181px;height:569px;"></div>
<div class="rbox" style="left:751px;top:427px;width:182px;height:572px;"></div>
<div class="rbox" style="left:928px;top:431px;width:180px;height:568px;"></div>
<div class="t" style="left:583px;top:440.85px;font-size:12.7px;color:#bd2a31;font-weight:bold">свободный остаток</div>
<div class="t" style="left:583px;top:458.85px;font-size:12.7px;color:#bd2a31;font-weight:bold">по фирме1</div>
<div class="t" style="left:601px;top:476.85px;font-size:12.7px;color:#bd2a31;font-weight:bold">склад1</div>
<div class="t" style="left:765.5px;top:467.05px;font-size:12.7px;color:#bd2a31;font-weight:bold">свободный остаток</div>
<div class="t" style="left:765.5px;top:484.65px;font-size:12.7px;color:#bd2a31;font-weight:bold">по фирме1</div>
<div class="t" style="left:792px;top:502.35px;font-size:12.7px;color:#bd2a31;font-weight:bold">склад2</div>
<div class="t" style="left:937px;top:469.45px;font-size:12.7px;color:#bd2a31;font-weight:bold">свободный остаток</div>
<div class="t" style="left:937px;top:487.65px;font-size:12.7px;color:#bd2a31;font-weight:bold">по фирме2</div>
<div class="t" style="left:964px;top:505.25px;font-size:12.7px;color:#bd2a31;font-weight:bold">склад1</div>
<div class="t" style="left:588px;top:639.50px;font-size:16.3px;font-weight:bold;color:#111">Видимость этих колонок автоматическая   (видно то что</div>
<div class="t" style="left:588px;top:661.60px;font-size:16.3px;font-weight:bold;color:#111">задано в фильтре)</div>
<div class="t" style="left:588px;top:685.00px;font-size:16.3px;font-weight:bold;color:#111;letter-spacing:.33px">или через ещё,изменить форму</div>
<div class="vl" style="left:1484px;top:241px;width:1px;height:780px;"></div>
<div class="a" style="left:1491px;top:243px;width:15px;height:15px;border:1px solid #9c9c9c;border-radius:50%;background:#fff"></div>
<div class="t" style="left:1512px;top:244.00px;font-size:13.0px;color:#4a4a4a">Категории</div>
<div class="a" style="left:1583px;top:243px;width:15px;height:15px;border:1px solid #9c9c9c;border-radius:50%;background:#fff"></div>
<div class="a" style="left:1587.5px;top:247.5px;width:6px;height:6px;border-radius:50%;background:#2f7d58"></div>
<div class="t" style="left:1604px;top:244.00px;font-size:13.0px;color:#4a4a4a">Группы</div>
<div class="a" style="left:1490px;top:268px;width:407px;height:489px;border:1px solid #a6a6a6;background:#fff"></div>
<div class="a" style="left:1491px;top:269px;width:391px;height:29px;background:#fbe38c"></div>
<div class="t" style="left:1520.5px;top:276.30px;font-size:13.0px;color:#3c3c3c">&lt;Все группы&gt;</div>
<div class="a" style="left:1491px;top:298px;width:391px;height:458px;overflow:hidden">
<svg class="a" style="left:28px;top:7px" width="15" height="13" viewBox="0 0 15 13"><path d="M0.5 1.5 H5.5 L7 3 H14.5 V12.5 H0.5 Z" fill="#f7d57a" stroke="#d9a93c" stroke-width="1"/><path d="M0.5 4.5 H14.5" stroke="#d9a93c" stroke-width="1"/></svg>
<div class="t" style="left:53px;top:7.60px;color:#333">1Чкалова</div>
<svg class="a" style="left:28px;top:36px" width="15" height="13" viewBox="0 0 15 13"><path d="M0.5 1.5 H5.5 L7 3 H14.5 V12.5 H0.5 Z" fill="#f7d57a" stroke="#d9a93c" stroke-width="1"/><path d="M0.5 4.5 H14.5" stroke="#d9a93c" stroke-width="1"/></svg>
<div class="t" style="left:53px;top:36.60px;color:#333">Зип-лок, БОПП пакеты</div>
<svg class="a" style="left:28px;top:65px" width="15" height="13" viewBox="0 0 15 13"><path d="M0.5 1.5 H5.5 L7 3 H14.5 V12.5 H0.5 Z" fill="#f7d57a" stroke="#d9a93c" stroke-width="1"/><path d="M0.5 4.5 H14.5" stroke="#d9a93c" stroke-width="1"/></svg>
<div class="t" style="left:53px;top:65.60px;color:#333">Канцтовары</div>
<svg class="a" style="left:28px;top:94px" width="15" height="13" viewBox="0 0 15 13"><path d="M0.5 1.5 H5.5 L7 3 H14.5 V12.5 H0.5 Z" fill="#f7d57a" stroke="#d9a93c" stroke-width="1"/><path d="M0.5 4.5 H14.5" stroke="#d9a93c" stroke-width="1"/></svg>
<div class="t" style="left:53px;top:94.60px;color:#333">Мешки для мусора</div>
<svg class="a" style="left:28px;top:123px" width="15" height="13" viewBox="0 0 15 13"><path d="M0.5 1.5 H5.5 L7 3 H14.5 V12.5 H0.5 Z" fill="#f7d57a" stroke="#d9a93c" stroke-width="1"/><path d="M0.5 4.5 H14.5" stroke="#d9a93c" stroke-width="1"/></svg>
<div class="t" style="left:53px;top:123.60px;color:#333">Мешки П/Э, ПП, сетки</div>
<svg class="a" style="left:28px;top:152px" width="15" height="13" viewBox="0 0 15 13"><path d="M0.5 1.5 H5.5 L7 3 H14.5 V12.5 H0.5 Z" fill="#f7d57a" stroke="#d9a93c" stroke-width="1"/><path d="M0.5 4.5 H14.5" stroke="#d9a93c" stroke-width="1"/></svg>
<div class="t" style="left:53px;top:152.60px;color:#333">Одноразовая посуда, контейнера, банки, ведра</div>
<svg class="a" style="left:28px;top:181px" width="15" height="13" viewBox="0 0 15 13"><path d="M0.5 1.5 H5.5 L7 3 H14.5 V12.5 H0.5 Z" fill="#f7d57a" stroke="#d9a93c" stroke-width="1"/><path d="M0.5 4.5 H14.5" stroke="#d9a93c" stroke-width="1"/></svg>
<div class="t" style="left:53px;top:181.60px;color:#333">Пакеты бумажные, крафт</div>
<svg class="a" style="left:28px;top:210px" width="15" height="13" viewBox="0 0 15 13"><path d="M0.5 1.5 H5.5 L7 3 H14.5 V12.5 H0.5 Z" fill="#f7d57a" stroke="#d9a93c" stroke-width="1"/><path d="M0.5 4.5 H14.5" stroke="#d9a93c" stroke-width="1"/></svg>
<div class="t" style="left:53px;top:210.60px;color:#333">Пакеты с вырубной ручкой</div>
<svg class="a" style="left:28px;top:239px" width="15" height="13" viewBox="0 0 15 13"><path d="M0.5 1.5 H5.5 L7 3 H14.5 V12.5 H0.5 Z" fill="#f7d57a" stroke="#d9a93c" stroke-width="1"/><path d="M0.5 4.5 H14.5" stroke="#d9a93c" stroke-width="1"/></svg>
<div class="t" style="left:53px;top:239.60px;color:#333">Пакеты с петлевой ручкой</div>
<svg class="a" style="left:28px;top:268px" width="15" height="13" viewBox="0 0 15 13"><path d="M0.5 1.5 H5.5 L7 3 H14.5 V12.5 H0.5 Z" fill="#f7d57a" stroke="#d9a93c" stroke-width="1"/><path d="M0.5 4.5 H14.5" stroke="#d9a93c" stroke-width="1"/></svg>
<div class="t" style="left:53px;top:268.60px;color:#333">Пакеты с пластиковой, веревочной ручкой</div>
<svg class="a" style="left:28px;top:297px" width="15" height="13" viewBox="0 0 15 13"><path d="M0.5 1.5 H5.5 L7 3 H14.5 V12.5 H0.5 Z" fill="#f7d57a" stroke="#d9a93c" stroke-width="1"/><path d="M0.5 4.5 H14.5" stroke="#d9a93c" stroke-width="1"/></svg>
<div class="t" style="left:53px;top:297.60px;color:#333">Пакеты типа Майка</div>
<svg class="a" style="left:28px;top:326px" width="15" height="13" viewBox="0 0 15 13"><path d="M0.5 1.5 H5.5 L7 3 H14.5 V12.5 H0.5 Z" fill="#f7d57a" stroke="#d9a93c" stroke-width="1"/><path d="M0.5 4.5 H14.5" stroke="#d9a93c" stroke-width="1"/></svg>
<div class="t" style="left:53px;top:326.60px;color:#333">Пакеты фасовочные ПНД ПВД</div>
<svg class="a" style="left:28px;top:355px" width="15" height="13" viewBox="0 0 15 13"><path d="M0.5 1.5 H5.5 L7 3 H14.5 V12.5 H0.5 Z" fill="#f7d57a" stroke="#d9a93c" stroke-width="1"/><path d="M0.5 4.5 H14.5" stroke="#d9a93c" stroke-width="1"/></svg>
<div class="t" style="left:53px;top:355.60px;color:#333">Пласты</div>
<svg class="a" style="left:28px;top:384px" width="15" height="13" viewBox="0 0 15 13"><path d="M0.5 1.5 H5.5 L7 3 H14.5 V12.5 H0.5 Z" fill="#f7d57a" stroke="#d9a93c" stroke-width="1"/><path d="M0.5 4.5 H14.5" stroke="#d9a93c" stroke-width="1"/></svg>
<div class="t" style="left:53px;top:384.60px;color:#333">Пленка П/Э, ПВХ</div>
<svg class="a" style="left:28px;top:413px" width="15" height="13" viewBox="0 0 15 13"><path d="M0.5 1.5 H5.5 L7 3 H14.5 V12.5 H0.5 Z" fill="#f7d57a" stroke="#d9a93c" stroke-width="1"/><path d="M0.5 4.5 H14.5" stroke="#d9a93c" stroke-width="1"/></svg>
<div class="t" style="left:53px;top:413.60px;color:#333">Подарочная упаковка</div>
<svg class="a" style="left:28px;top:442px" width="15" height="13" viewBox="0 0 15 13"><path d="M0.5 1.5 H5.5 L7 3 H14.5 V12.5 H0.5 Z" fill="#f7d57a" stroke="#d9a93c" stroke-width="1"/><path d="M0.5 4.5 H14.5" stroke="#d9a93c" stroke-width="1"/></svg>
<div class="t" style="left:53px;top:442.60px;color:#333">Спецодежда</div>
</div>
<svg class="a" style="left:1885px;top:276px" width="8" height="6"><path d="M0.5 5 L4 1 L7.5 5 Z" fill="#c4c4c4"/></svg>
<div class="a" style="left:1885px;top:292px;width:8px;height:439px;border-radius:4px;background:#dcdcdc"></div>
<div class="a" style="left:1885px;top:292px;width:8px;height:319px;border-radius:4px;background:#9b9b9b"></div>
<svg class="a" style="left:1885px;top:741px" width="8" height="6"><path d="M0.5 1 L4 5 L7.5 1 Z" fill="#555"/></svg>
<div class="yp" style="left:1491px;top:766px;width:406px;height:227px;"></div>
<svg class="a" style="left:1497px;top:775px" width="13" height="9" viewBox="0 0 13 9" fill="none" stroke="#3c955a" stroke-width="1.5"><path d="M1.5 1.5 L6.5 6.5 L11.5 1.5"/></svg>
<div class="t" style="left:1516px;top:773.46px;font-size:15.4px;color:#3c955a">Аренда Помещений</div>
<div class="t" style="left:1625px;top:856.00px;font-size:13.0px;color:#c2c0b8">Добавить изображение</div>
<svg class="a" style="left:1496px;top:941px" width="14" height="14" viewBox="0 0 14 14"><path d="M5 3.5 V8" stroke="#3a3a30" stroke-width="1.5"/><path d="M2.6 4.4 L5 1.2 L7.4 4.4 Z" fill="#3a3a30"/><path d="M9 6 V10.5" stroke="#3a3a30" stroke-width="1.5"/><path d="M6.6 9.6 L9 12.8 L11.4 9.6 Z" fill="#3a3a30"/></svg>
<div class="t" style="left:1523px;top:944.00px;font-size:13.0px;color:#333;text-decoration:underline;text-underline-offset:1px">Аналоги доступны только для запасов</div>
<svg class="a" style="left:1497px;top:969px" width="12" height="15" viewBox="0 0 12 15" fill="none" stroke="#3a3a30" stroke-width="1.1"><rect x="1.5" y="1.8" width="9" height="11.8"/><path d="M3.5 1.5 H8.5" stroke-width="1.6"/><path d="M3.4 5.2 H8.6 M3.4 7.4 H8.6 M3.4 9.6 H8.6"/></svg>
<div class="t" style="left:1523px;top:973.00px;font-size:13.0px;color:#333;text-decoration:underline;text-underline-offset:1px">Нет сопутствующих товаров</div>
<div class="t" style="left:1835px;top:1006.00px;font-size:13.0px;color:#5a5a5a;text-decoration:underline;text-underline-offset:1px">свернуть</div>
</body></html>
